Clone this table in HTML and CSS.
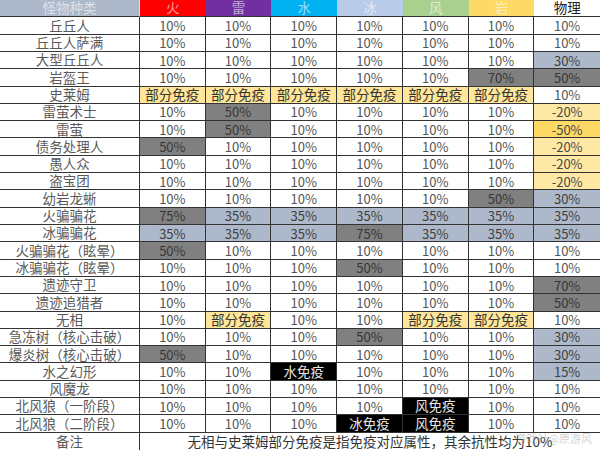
FILE: index.html
```html
<!DOCTYPE html>
<html lang="zh">
<head>
<meta charset="utf-8">
<link rel="stylesheet" href="styles.css">
</head>
<body>
<div class="sheet">
  <div class="grid">
    <div class="h h0">怪物种类</div><div class="h fire">火</div><div class="h elec">雷</div><div class="h water">水</div><div class="h ice">冰</div><div class="h wind">风</div><div class="h rock">岩</div><div class="h phys">物理</div>

    <div class="n">丘丘人</div><div>10%</div><div>10%</div><div>10%</div><div>10%</div><div>10%</div><div>10%</div><div>10%</div>
    <div class="n">丘丘人萨满</div><div>10%</div><div>10%</div><div>10%</div><div>10%</div><div>10%</div><div>10%</div><div>10%</div>
    <div class="n">大型丘丘人</div><div>10%</div><div>10%</div><div>10%</div><div>10%</div><div>10%</div><div>10%</div><div class="b">30%</div>
    <div class="n">岩盔王</div><div>10%</div><div>10%</div><div>10%</div><div>10%</div><div>10%</div><div class="g">70%</div><div class="g">50%</div>
    <div class="n">史莱姆</div><div class="y">部分免疫</div><div class="y">部分免疫</div><div class="y">部分免疫</div><div class="y">部分免疫</div><div class="y">部分免疫</div><div class="y">部分免疫</div><div>10%</div>
    <div class="n">雷萤术士</div><div>10%</div><div class="g">50%</div><div>10%</div><div>10%</div><div>10%</div><div>10%</div><div class="ly">-20%</div>
    <div class="n">雷萤</div><div>10%</div><div class="g">50%</div><div>10%</div><div>10%</div><div>10%</div><div>10%</div><div class="y2">-50%</div>
    <div class="n">债务处理人</div><div class="g">50%</div><div>10%</div><div>10%</div><div>10%</div><div>10%</div><div>10%</div><div class="ly">-20%</div>
    <div class="n">愚人众</div><div>10%</div><div>10%</div><div>10%</div><div>10%</div><div>10%</div><div>10%</div><div class="ly">-20%</div>
    <div class="n">盗宝团</div><div>10%</div><div>10%</div><div>10%</div><div>10%</div><div>10%</div><div>10%</div><div class="ly">-20%</div>
    <div class="n">幼岩龙蜥</div><div>10%</div><div>10%</div><div>10%</div><div>10%</div><div>10%</div><div class="g">50%</div><div class="b">30%</div>
    <div class="n">火骗骗花</div><div class="g">75%</div><div class="b">35%</div><div class="b">35%</div><div class="b">35%</div><div class="b">35%</div><div class="b">35%</div><div class="b">35%</div>
    <div class="n">冰骗骗花</div><div class="b">35%</div><div class="b">35%</div><div class="b">35%</div><div class="g">75%</div><div class="b">35%</div><div class="b">35%</div><div class="b">35%</div>
    <div class="n">火骗骗花（眩晕）</div><div class="g">50%</div><div>10%</div><div>10%</div><div>10%</div><div>10%</div><div>10%</div><div>10%</div>
    <div class="n">冰骗骗花（眩晕）</div><div>10%</div><div>10%</div><div>10%</div><div class="g">50%</div><div>10%</div><div>10%</div><div>10%</div>
    <div class="n">遗迹守卫</div><div>10%</div><div>10%</div><div>10%</div><div>10%</div><div>10%</div><div>10%</div><div class="g">70%</div>
    <div class="n">遗迹追猎者</div><div>10%</div><div>10%</div><div>10%</div><div>10%</div><div>10%</div><div>10%</div><div class="g">50%</div>
    <div class="n">无相</div><div>10%</div><div class="y">部分免疫</div><div>10%</div><div>10%</div><div class="y">部分免疫</div><div class="y">部分免疫</div><div>10%</div>
    <div class="n">急冻树（核心击破）</div><div>10%</div><div>10%</div><div>10%</div><div class="g">50%</div><div>10%</div><div>10%</div><div class="b">30%</div>
    <div class="n">爆炎树（核心击破）</div><div class="g">50%</div><div>10%</div><div>10%</div><div>10%</div><div>10%</div><div>10%</div><div class="b">30%</div>
    <div class="n">水之幻形</div><div>10%</div><div>10%</div><div class="k">水免疫</div><div>10%</div><div>10%</div><div>10%</div><div class="b">15%</div>
    <div class="n">风魔龙</div><div>10%</div><div>10%</div><div>10%</div><div>10%</div><div>10%</div><div>10%</div><div>10%</div>
    <div class="n">北风狼（一阶段）</div><div>10%</div><div>10%</div><div>10%</div><div>10%</div><div class="k">风免疫</div><div>10%</div><div>10%</div>
    <div class="n">北风狼（二阶段）</div><div>10%</div><div>10%</div><div>10%</div><div class="k">冰免疫</div><div class="k">风免疫</div><div>10%</div><div>10%</div>
    <div class="n last">备注</div><div class="note last">无相与史莱姆部分免疫是指免疫对应属性，其余抗性均为10%</div>
  </div>
  <div class="mark">游戏社@原游风</div>
</div>
</body>
</html>
```

FILE: styles.css
```css
html, body {
  margin: 0;
  padding: 0;
  background: #ffffff;
}

.sheet {
  position: relative;
  width: 600px;
  height: 450px;
  overflow: hidden;
  font-family: "Noto Sans CJK SC", "Noto Sans", sans-serif;
}

.grid {
  display: grid;
  grid-template-columns: 140px repeat(7, 1fr);
  grid-template-rows: repeat(26, 1fr);
  width: 600px;
  height: 450px;
}

.grid > div {
  box-sizing: border-box;
  display: flex;
  align-items: center;
  justify-content: center;
  border-right: 1px solid #333333;
  border-bottom: 1px solid #333333;
  background: #ffffff;
  color: #555555;
  font-size: 13px;
  line-height: 1;
  white-space: nowrap;
}

.grid > div:nth-child(8n) {
  border-right: none;
}

.grid > .h {
  border-right: none;
  color: rgba(255, 255, 255, 0.6);
  font-size: 13.5px;
}

.grid > .h0 { background: #adb9ca; border-right: 1px solid #d8dee6; }
.grid > .fire { background: #ff0000; }
.grid > .elec { background: #7030a0; }
.grid > .water { background: #00b0f0; }
.grid > .ice { background: #b8cbe8; }
.grid > .wind { background: #a9d08e; }
.grid > .rock { background: #ffd966; }
.grid > .phys { background: #ffffff; color: #222222; }

.grid > .n { color: #5a5a5a; font-size: 13.5px; }

.grid > .b { background: #adb9ca; color: #404040; }
.grid > .g { background: #808080; color: #363636; }
.grid > .y { background: #ffe699; color: #333333; font-size: 13.5px; }
.grid > .ly { background: #ffe8a3; color: #4a4a4a; }
.grid > .y2 { background: #ffd966; color: #4a4a4a; }
.grid > .k { background: #000000; color: #e6e6e6; font-size: 13.5px; }

.grid > .note {
  grid-column: 2 / span 7;
  border-right: none;
  font-size: 13.5px;
  color: #333333;
}

.grid > .last { border-bottom: none; }

.mark {
  position: absolute;
  right: 8px;
  bottom: 4px;
  font-size: 11px;
  color: rgba(150, 150, 150, 0.45);
}
```
